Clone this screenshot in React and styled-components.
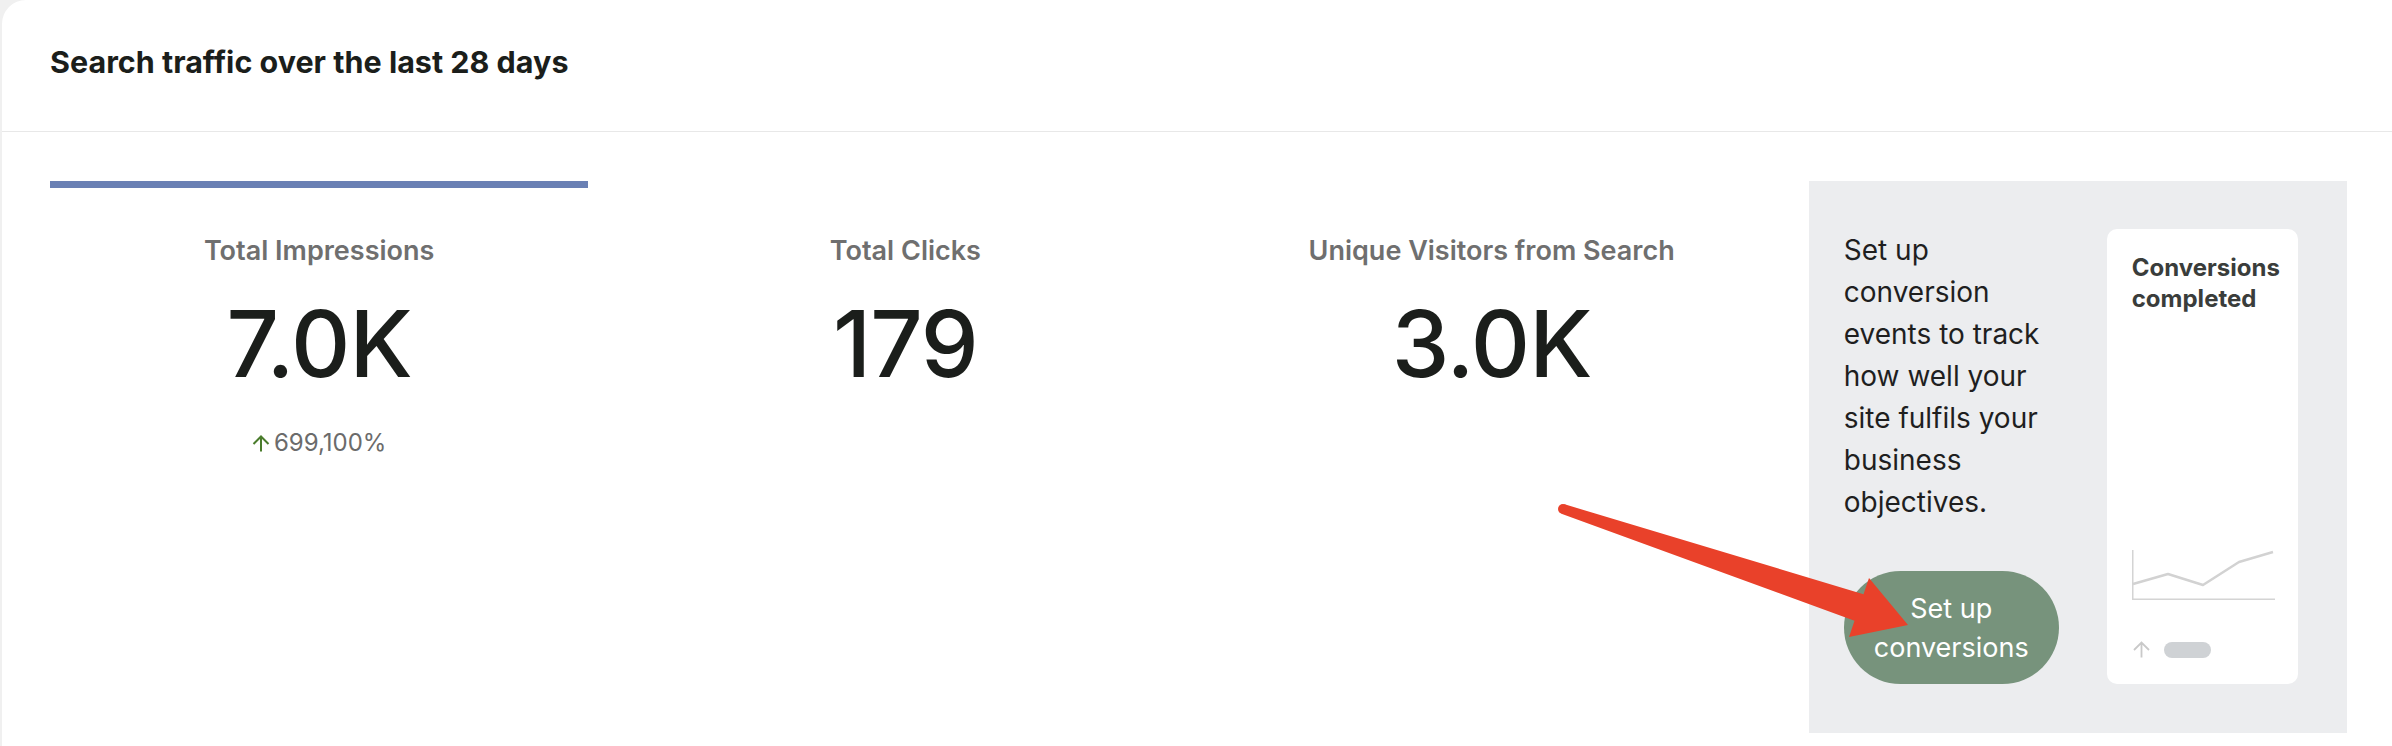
import styled, { createGlobalStyle } from "styled-components";

const GlobalStyle = createGlobalStyle`
  html, body {
    margin: 0;
    background: #f0f0f0;
  }
  body {
    font-family: Inter, "Noto Sans", sans-serif;
    overflow: hidden;
  }
`;

const metrics = [
  { label: "Total Impressions", value: "7.0K", change: "699,100%", active: true },
  { label: "Total Clicks", value: "179" },
  { label: "Unique Visitors from Search", value: "3.0K" },
];

const chartPoints = "1,34 36,24 71,35 107,12 141,2";

const UpArrow = ({ color, width = 18, height = 17, stroke = 2 }) => (
  <svg width={width} height={height} viewBox="0 0 18 17" fill="none">
    <path
      d="M9 16.5V1.5M1.5 9L9 1.5L16.5 9"
      stroke={color}
      strokeWidth={stroke}
      strokeLinejoin="miter"
    />
  </svg>
);

const App = () => {
  return (
    <Page>
      <GlobalStyle />
      <Card>
        <Header>
          <Title>Search traffic over the last 28 days</Title>
        </Header>
        <Body>
          {metrics.map((m) => (
            <Metric key={m.label}>
              <TopBar $active={m.active} />
              <Label>{m.label}</Label>
              <Value>{m.value}</Value>
              {m.change && (
                <Change>
                  <UpArrow color="#4a7c2c" />
                  {m.change}
                </Change>
              )}
            </Metric>
          ))}
          <Promo>
            <PromoColumn>
              <PromoText>
                Set up conversion events to track how well your site fulfils
                your business objectives.
              </PromoText>
              <SetupButton type="button">Set up conversions</SetupButton>
            </PromoColumn>
            <Preview>
              <PreviewTitle>Conversions completed</PreviewTitle>
              <Chart width="143" height="50" viewBox="0 0 143 50">
                <path d="M0.75 0V49.25H143" stroke="#d4d4d4" strokeWidth="1.5" fill="none" />
                <polyline
                  points={chartPoints}
                  stroke="#d2d2d2"
                  strokeWidth="2.5"
                  fill="none"
                  strokeLinejoin="round"
                />
              </Chart>
              <Indicator>
                <UpArrow color="#c9c9c9" width={19} height={17} stroke={1.8} />
                <Pill />
              </Indicator>
            </Preview>
          </Promo>
        </Body>
      </Card>
      <Annotation width="2392" height="746" viewBox="0 0 2392 746">
        <circle cx="1563" cy="509" r="5" fill="#e9412a" />
        <polygon
          points="1564.6,504.3 1863.5,594.2 1869,578 1908,625 1849,637 1854.5,620.8 1561.4,513.7"
          fill="#e9412a"
        />
      </Annotation>
    </Page>
  );
};

const Page = styled.div`
  position: relative;
  width: 2392px;
  height: 746px;
  overflow: hidden;
`;

const Card = styled.div`
  margin-left: 2px;
  min-height: 746px;
  background: #fff;
  border-top-left-radius: 24px;
`;

const Header = styled.div`
  box-sizing: border-box;
  height: 132px;
  padding: 0 0 7px 48px;
  display: flex;
  align-items: center;
  border-bottom: 1px solid #e8e8e8;
`;

const Title = styled.h2`
  margin: 0;
  font-size: 30.5px;
  line-height: 40px;
  font-weight: 700;
  color: #1b1e1b;
`;

const Body = styled.div`
  display: grid;
  grid-template-columns: repeat(4, 1fr);
  column-gap: 48px;
  padding: 49px 45px 14px 48px;
`;

const Metric = styled.div`
  display: flex;
  flex-direction: column;
  align-items: center;
`;

const TopBar = styled.div`
  align-self: stretch;
  height: 7px;
  background: ${(p) => (p.$active ? "#6a80b4" : "transparent")};
`;

const Label = styled.div`
  margin-top: 46px;
  font-size: 27px;
  line-height: 34px;
  font-weight: 600;
  color: #6f6f6f;
`;

const Value = styled.div`
  margin-top: 30px;
  font-size: 92px;
  line-height: 92px;
  font-weight: 500;
  letter-spacing: -1px;
  color: #1b1e1b;
`;

const Change = styled.div`
  margin-top: 38px;
  display: flex;
  align-items: center;
  gap: 4px;
  font-size: 24px;
  line-height: 30px;
  color: #6b6b6b;
`;

const Promo = styled.div`
  display: grid;
  grid-template-columns: 215px 191px;
  column-gap: 48px;
  padding: 48px 48px 49px 35px;
  background: #ecedef;
`;

const PromoColumn = styled.div`
  display: flex;
  flex-direction: column;
`;

const PromoText = styled.p`
  margin: 0;
  font-size: 28px;
  line-height: 42px;
  color: #1f1f1f;
`;

const SetupButton = styled.button`
  margin-top: 48px;
  height: 113px;
  width: 100%;
  padding: 0 28px;
  border: none;
  border-radius: 57px;
  background: #77937c;
  color: #fff;
  font-family: inherit;
  font-size: 27px;
  line-height: 39px;
  cursor: pointer;
`;

const Preview = styled.div`
  display: flex;
  flex-direction: column;
  padding: 23px 23px 26px 25px;
  background: #fff;
  border-radius: 10px;
`;

const PreviewTitle = styled.div`
  font-size: 24px;
  line-height: 31px;
  font-weight: 700;
  color: #3a3d3b;
`;

const Chart = styled.svg`
  margin-top: auto;
  display: block;
`;

const Indicator = styled.div`
  margin-top: 41px;
  display: flex;
  align-items: center;
  gap: 13px;
`;

const Pill = styled.span`
  width: 47px;
  height: 16px;
  border-radius: 8px;
  background: #cfd2d5;
`;

const Annotation = styled.svg`
  position: absolute;
  left: 0;
  top: 0;
  pointer-events: none;
`;

export default App;
